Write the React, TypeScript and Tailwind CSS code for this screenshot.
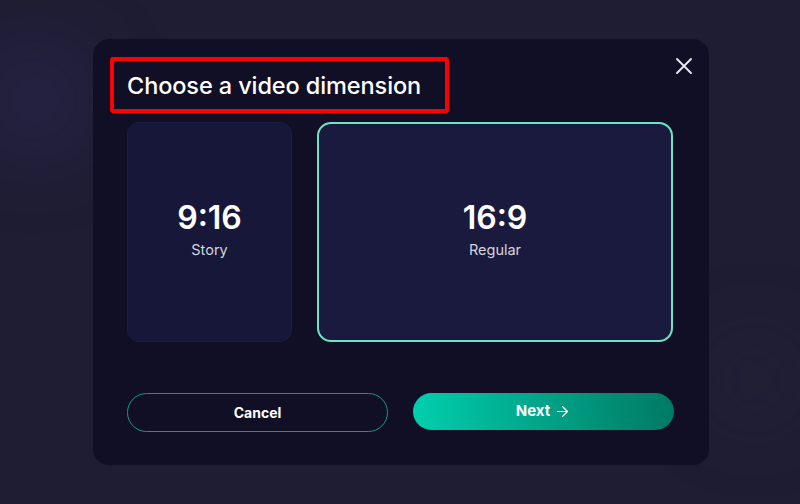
import { X, ArrowRight } from "lucide-react";

type Dimension = {
  ratio: string;
  label: string;
  width: string;
  selected?: boolean;
};

const dimensions: Dimension[] = [
  { ratio: "9:16", label: "Story", width: "w-[165px]" },
  { ratio: "16:9", label: "Regular", width: "w-[356px]", selected: true },
];

const DimensionCard = ({ ratio, label, width, selected }: Dimension) => (
  <button
    className={`${width} h-[220px] flex flex-col items-center justify-center pb-[5px] ${
      selected
        ? "rounded-[14px] border-2 border-[#6fe3c4] bg-[#191a3d]"
        : "rounded-xl border border-[#1c1b42] bg-[#17173a]"
    }`}
  >
    <span className="text-[32px] leading-[38px] font-semibold text-white">{ratio}</span>
    <span className="mt-[3px] text-[14.5px] leading-5 text-[#d4d4de]">{label}</span>
  </button>
);

export default function App() {
  return (
    <div className="relative h-screen w-full overflow-hidden bg-[#1e1d33] flex items-center justify-center font-['Inter',_'Noto_Sans',_sans-serif]">
      {/* Background glows */}
      <div className="absolute left-[-20px] top-[50px] h-[100px] w-[110px] rounded-full bg-[#35306a]/40 blur-2xl" />
      <div className="absolute left-[720px] top-[345px] h-[70px] w-[70px] rounded-full bg-[#2c2a48]/50 blur-2xl" />

      {/* Modal */}
      <div className="relative ml-[2px] w-[616px] h-[426px] rounded-2xl bg-[#100f26] px-[34px] pt-[18px] flex flex-col">
        <button className="absolute top-[13px] right-[11px] text-[#e8e8f0]">
          <X size={28} strokeWidth={1.6} />
        </button>

        {/* Title (annotated) */}
        <div className="-ml-[17px] w-[339px] h-[56px] rounded-[3px] border-4 border-[#ff0000] flex items-center pl-[13px] pt-[2px]">
          <h2 className="text-[23.5px] font-medium text-white tracking-[-0.1px]">Choose a video dimension</h2>
        </div>

        {/* Options */}
        <div className="mt-[9px] flex gap-[25px]">
          {dimensions.map((d) => (
            <DimensionCard key={d.ratio} {...d} />
          ))}
        </div>

        {/* Actions */}
        <div className="mt-[51px] flex items-start gap-[25px]">
          <button className="w-[261px] h-[39px] rounded-full border border-[#109a86] text-sm font-bold text-white">
            Cancel
          </button>
          <button className="w-[261px] h-[37px] rounded-full bg-gradient-to-r from-[#00cfae] to-[#007a64] text-[15px] font-bold text-white flex items-center justify-center gap-1">
            Next
            <ArrowRight size={17} strokeWidth={1.75} />
          </button>
        </div>
      </div>
    </div>
  );
}
